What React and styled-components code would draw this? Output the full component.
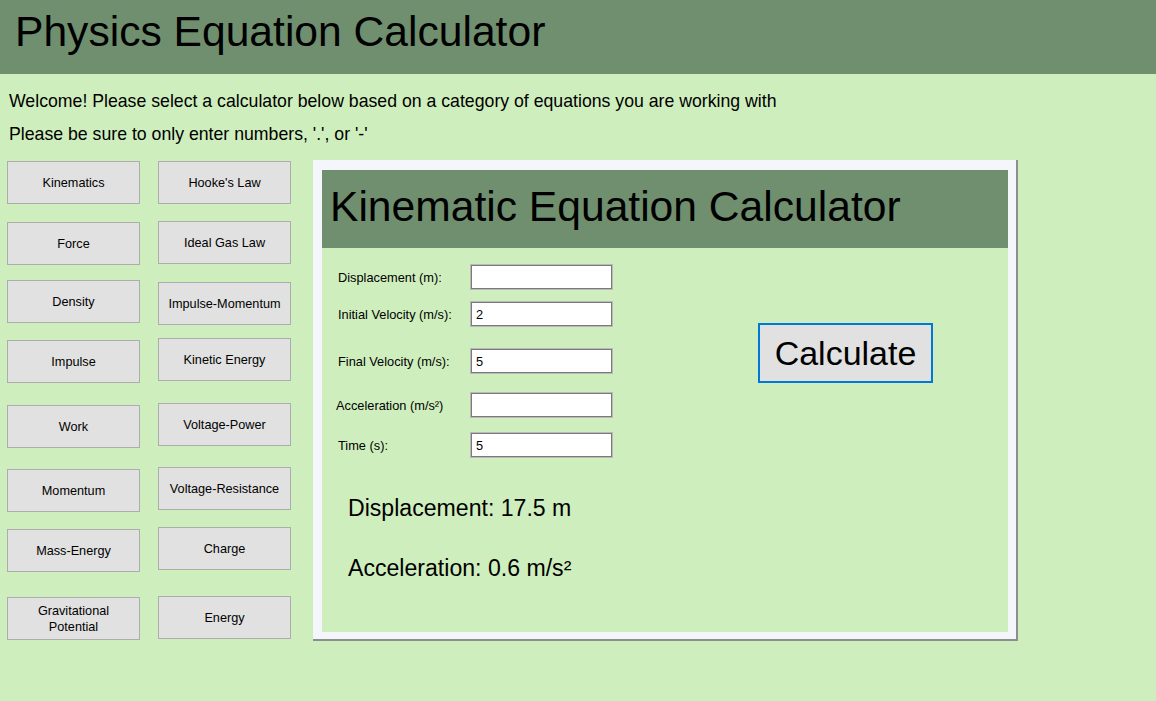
import React from 'react'
import styled, {createGlobalStyle} from 'styled-components'

const GlobalStyle = createGlobalStyle`
    body {
        margin: 0;
        background: #cfeebd;
        font-family: "Liberation Sans", Arial, sans-serif;
        color: #000;
    }
`

const Page = styled.div`
    width: 1156px;
    height: 701px;
    overflow: hidden;
    background: #cfeebd;
`

const TitleBar = styled.header`
    height: 74px;
    background: #6f8f6f;
    padding-left: 15px;

    h1 {
        margin: 0;
        font-size: 42.6px;
        font-weight: normal;
        line-height: 62px;
    }
`

const Intro = styled.div`
    margin-top: 11px;
    padding-left: 9px;

    p {
        margin: 0;
        font-size: 17.7px;
        line-height: 33px;
    }
`

const Main = styled.div`
    display: flex;
    align-items: flex-start;
    margin-top: 9px;
    padding-left: 7px;
`

const ButtonColumns = styled.div`
    display: flex;
    gap: 18px;
    margin-right: 22px;
`

const ButtonColumn = styled.div`
    display: flex;
    flex-direction: column;
    width: 133px;
`

const CategoryButton = styled.button`
    box-sizing: border-box;
    width: 133px;
    height: 43px;
    margin-top: ${p => p.$gap}px;
    background: #e1e1e1;
    border: 1px solid #adadad;
    font-family: "Liberation Sans", Arial, sans-serif;
    font-size: 12.7px;
    line-height: 16px;
    color: #000;
    padding: 0 1px;
`

const Panel = styled.section`
    box-sizing: border-box;
    width: 705px;
    height: 481px;
    background: #f4f6fb;
    padding: 10px 8px 7px 9px;
    border-right: 2px solid #8e8e8e;
    border-bottom: 2px solid #8e8e8e;
`

const PanelInner = styled.div`
    height: 100%;
    background: #cfeebd;
`

const PanelHeader = styled.div`
    height: 78px;
    background: #6f8f6f;
    padding-left: 8px;

    h2 {
        margin: 0;
        font-size: 42.6px;
        font-weight: normal;
        line-height: 72px;
    }
`

const PanelBody = styled.div`
    display: flex;
    align-items: flex-start;
    padding: 17px 0 0 16px;
`

const Fields = styled.div`
    display: flex;
    flex-direction: column;
`

const FieldRow = styled.div`
    display: flex;
    align-items: center;
    margin-top: ${p => p.$gap}px;
`

const FieldLabel = styled.label`
    width: 133px;
    margin-left: ${p => p.$shift || 0}px;
    padding-right: ${p => -(p.$shift || 0)}px;
    font-size: 12.8px;
`

const FieldInput = styled.input`
    box-sizing: border-box;
    width: 141px;
    height: 24px;
    margin: 0;
    padding: 0 4px;
    background: #fff;
    border: 1px solid #7a7a7a;
    box-shadow: 0 0 0 1px #b9b9b9;
    font-family: "Liberation Sans", Arial, sans-serif;
    font-size: 12.8px;
    color: #000;
    outline: none;
`

const CalculateButton = styled.button`
    box-sizing: border-box;
    width: 175px;
    height: 60px;
    margin: 58px 0 0 146px;
    background: #e1e1e1;
    border: 2px solid #0078d7;
    font-family: "Liberation Sans", Arial, sans-serif;
    font-size: 34px;
    color: #000;
    padding: 0;
`

const Results = styled.div`
    margin-top: 21px;
    padding-left: 26px;

    p {
        margin: 0;
        font-size: 23.1px;
        line-height: 60px;
    }
`

const leftButtons = [
    {label: 'Kinematics', gap: 1},
    {label: 'Force', gap: 18},
    {label: 'Density', gap: 15},
    {label: 'Impulse', gap: 17},
    {label: 'Work', gap: 22},
    {label: 'Momentum', gap: 21},
    {label: 'Mass-Energy', gap: 17},
    {label: <>Gravitational<br/>Potential</>, gap: 25},
]

const rightButtons = [
    {label: "Hooke's Law", gap: 1},
    {label: 'Ideal Gas Law', gap: 17},
    {label: 'Impulse-Momentum', gap: 18},
    {label: 'Kinetic Energy', gap: 13},
    {label: 'Voltage-Power', gap: 22},
    {label: 'Voltage-Resistance', gap: 21},
    {label: 'Charge', gap: 17},
    {label: 'Energy', gap: 26},
]

const fields = [
    {label: 'Displacement (m):', value: '', gap: 0},
    {label: 'Initial Velocity (m/s):', value: '2', gap: 13},
    {label: 'Final Velocity (m/s):', value: '5', gap: 23},
    {label: 'Acceleration (m/s²)', value: '', gap: 20, shift: -2},
    {label: 'Time (s):', value: '5', gap: 16},
]

const App = () => {
    return (
        <Page>
            <GlobalStyle/>
            <TitleBar>
                <h1>Physics Equation Calculator</h1>
            </TitleBar>
            <Intro>
                <p>Welcome! Please select a calculator below based on a category of equations you are working with</p>
                <p>Please be sure to only enter numbers, '.', or '-'</p>
            </Intro>
            <Main>
                <ButtonColumns>
                    <ButtonColumn>
                        {leftButtons.map((b, i) => (
                            <CategoryButton key={i} $gap={b.gap}>{b.label}</CategoryButton>
                        ))}
                    </ButtonColumn>
                    <ButtonColumn>
                        {rightButtons.map((b, i) => (
                            <CategoryButton key={i} $gap={b.gap}>{b.label}</CategoryButton>
                        ))}
                    </ButtonColumn>
                </ButtonColumns>
                <Panel>
                    <PanelInner>
                        <PanelHeader>
                            <h2>Kinematic Equation Calculator</h2>
                        </PanelHeader>
                        <PanelBody>
                            <Fields>
                                {fields.map((f, i) => (
                                    <FieldRow key={i} $gap={f.gap}>
                                        <FieldLabel $shift={f.shift}>{f.label}</FieldLabel>
                                        <FieldInput type='text' defaultValue={f.value}/>
                                    </FieldRow>
                                ))}
                            </Fields>
                            <CalculateButton>Calculate</CalculateButton>
                        </PanelBody>
                        <Results>
                            <p>Displacement: 17.5 m</p>
                            <p>Acceleration: 0.6 m/s²</p>
                        </Results>
                    </PanelInner>
                </Panel>
            </Main>
        </Page>
    )
}

export default App
